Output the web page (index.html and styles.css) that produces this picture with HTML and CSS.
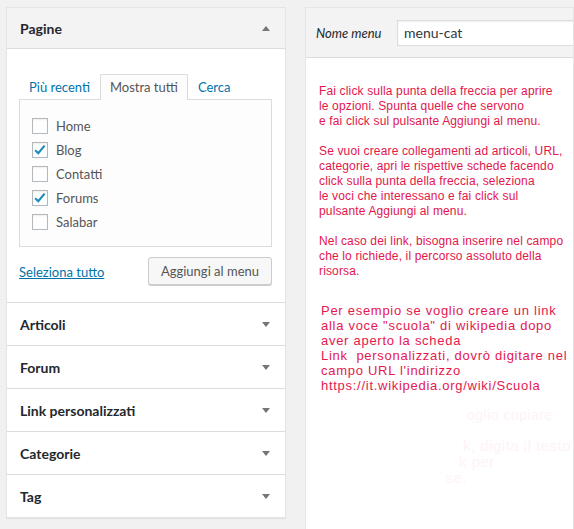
FILE: index.html
```html
<!DOCTYPE html>
<html lang="it">
<head>
<meta charset="utf-8">
<title>Menu</title>
<link rel="stylesheet" href="styles.css">
</head>
<body>
<div class="page">
  <div class="side">
    <section class="box open">
      <div class="box-head">
        <h3>Pagine</h3>
        <span class="arrow up"></span>
      </div>
      <div class="box-body">
        <ul class="tabs">
          <li>Più recenti</li>
          <li class="active">Mostra tutti</li>
          <li>Cerca</li>
        </ul>
        <div class="tab-panel">
          <label class="item"><span class="cb"></span>Home</label>
          <label class="item"><span class="cb checked"><svg viewBox="0 0 16 16" width="16" height="16"><path d="M3.2 8.2 L6.3 11.2 L12.6 3.6" fill="none" stroke="#1e8cbe" stroke-width="2.2" stroke-linecap="butt" stroke-linejoin="miter"/></svg></span>Blog</label>
          <label class="item"><span class="cb"></span>Contatti</label>
          <label class="item"><span class="cb checked"><svg viewBox="0 0 16 16" width="16" height="16"><path d="M3.2 8.2 L6.3 11.2 L12.6 3.6" fill="none" stroke="#1e8cbe" stroke-width="2.2" stroke-linecap="butt" stroke-linejoin="miter"/></svg></span>Forums</label>
          <label class="item"><span class="cb"></span>Salabar</label>
        </div>
        <div class="actions">
          <a class="select-all" href="#">Seleziona tutto</a>
          <button class="btn">Aggiungi al menu</button>
        </div>
      </div>
    </section>
    <section class="box closed"><h3>Articoli</h3><span class="arrow down"></span></section>
    <section class="box closed"><h3>Forum</h3><span class="arrow down"></span></section>
    <section class="box closed"><h3>Link personalizzati</h3><span class="arrow down"></span></section>
    <section class="box closed"><h3>Categorie</h3><span class="arrow down"></span></section>
    <section class="box closed"><h3>Tag</h3><span class="arrow down"></span></section>
  </div>

  <div class="main">
    <div class="main-head">
      <span class="name-label">Nome menu</span>
      <div class="name-input">menu-cat</div>
    </div>
    <div class="main-body">
      <p class="note">Fai click sulla punta della freccia per aprire<br>le opzioni. Spunta quelle che servono<br>e fai click sul pulsante Aggiungi al menu.</p>
      <p class="note">Se vuoi creare collegamenti ad articoli, URL,<br>categorie, apri le rispettive schede facendo<br>click sulla punta della freccia, seleziona<br>le voci che interessano e fai click sul<br>pulsante Aggiungi al menu.</p>
      <p class="note">Nel caso dei link, bisogna inserire nel campo<br>che lo richiede, il percorso assoluto della<br>risorsa.</p>
      <p class="note big">Per esempio se voglio creare un link<br>alla voce "scuola" di wikipedia dopo<br>aver aperto la scheda<br>Link &nbsp;personalizzati, dovrò digitare nel<br>campo URL l'indirizzo<br>https://it.wikipedia.org/wiki/Scuola</p>
      <span class="ghost g2">oglio copiare</span>
      <span class="ghost g3">k, digita il testo</span>
      <span class="ghost g4">k per</span>
      <span class="ghost g5">se.</span>
    </div>
  </div>
</div>
</body>
</html>
```

FILE: styles.css
```css
* { box-sizing: border-box; }
html, body { margin: 0; padding: 0; }
body {
  background: #f1f1f1;
  font-family: "Segoe UI", Lato, "Noto Sans", sans-serif;
  font-size: 13px;
  color: #444;
  overflow: hidden;
}
.page {
  display: flex;
  align-items: flex-start;
  gap: 19px;
  padding: 7px 0 0 6px;
  width: 574px;
  height: 529px;
}
.side {
  width: 280px;
  flex: none;
  background: #fff;
  border: 1px solid #e5e5e5;
  box-shadow: 0 1px 1px rgba(0,0,0,0.06);
}
.box + .box { border-top: 1px solid #dcdcdc; }
h3 {
  margin: 0;
  font-size: 14px;
  font-weight: 700;
  color: #23282d;
}
.box-head {
  height: 41px;
  background: #f3f3f3;
  border-bottom: 1px solid #dcdcdc;
  display: flex;
  align-items: center;
  justify-content: space-between;
  padding: 0 15px 0 13px;
}
.closed {
  height: 43px;
  display: flex;
  align-items: center;
  justify-content: space-between;
  padding: 0 15px 0 13px;
}
.arrow {
  width: 0; height: 0;
  border-left: 4px solid transparent;
  border-right: 4px solid transparent;
}
.arrow.up { border-bottom: 5px solid #72777c; }
.arrow.down { border-top: 5px solid #72777c; }

.box-body {
  padding: 25px 13px 17px 12px;
}
.tabs {
  list-style: none;
  margin: 0;
  padding: 0;
  display: flex;
  height: 25px;
  position: relative;
  z-index: 1;
}
.tabs li {
  padding: 0 9px;
  line-height: 24px;
  color: #0073aa;
  border: 1px solid transparent;
  border-bottom: none;
}
.tabs li.active {
  color: #555;
  background: #fdfdfd;
  border-color: #dcdcdc;
  height: 26px;
}
.tab-panel {
  border: 1px solid #dcdcdc;
  background: #fdfdfd;
  height: 148px;
  padding: 18px 12px 0;
  display: flex;
  flex-direction: column;
  gap: 8px;
}
.item {
  display: flex;
  align-items: center;
  gap: 8px;
  height: 16px;
  color: #555;
  line-height: 16px;
}
.cb {
  width: 16px;
  height: 16px;
  border: 1px solid #b4b9be;
  background: #fff;
  box-shadow: inset 0 1px 2px rgba(0,0,0,0.07);
  flex: none;
  position: relative;
}
.cb svg { position: absolute; left: -1px; top: -1px; }
.actions {
  display: flex;
  justify-content: space-between;
  align-items: center;
  margin-top: 10px;
}
.select-all {
  color: #0073aa;
  text-decoration: underline;
  margin-top: 2px;
}
.btn {
  font-family: inherit;
  font-size: 13px;
  color: #555;
  height: 28px;
  padding: 0 12px 1px;
  background: #f7f7f7;
  border: 1px solid #cccccc;
  border-radius: 3px;
  box-shadow: 0 1px 0 #cccccc;
}

.main {
  flex: 1;
  min-width: 0;
  height: 540px;
  background: #fff;
  border: 1px solid #e5e5e5;
}
.main-head {
  height: 50px;
  background: #f3f3f3;
  border-bottom: 1px solid #dcdcdc;
  display: flex;
  align-items: center;
  padding: 0 0 0 10px;
  gap: 11px;
  overflow: hidden;
}
.name-label {
  flex: none;
  font-style: italic;
  color: #23282d;
  white-space: nowrap;
  width: 70px;
}
.name-input {
  flex: none;
  width: 220px;
  height: 26px;
  border: 1px solid #dcdcdc;
  background: #fff;
  box-shadow: inset 0 1px 2px rgba(0,0,0,0.07);
  font-size: 14px;
  line-height: 24px;
  padding: 0 6px;
  color: #32373c;
}
.main-body {
  position: relative;
  padding: 26px 0 0 13px;
}
.note {
  margin: 0 0 15px;
  font-family: "Liberation Sans", Arial, sans-serif;
  font-size: 12px;
  line-height: 15px;
  color: #e2164c;
  letter-spacing: 0.15px;
  white-space: nowrap;
}
.note.big {
  font-size: 13px;
  letter-spacing: 0.72px;
  margin-top: 24px;
  padding-left: 2px;
  color: #e5174f;
}
.ghost {
  position: absolute;
  font-family: "Liberation Sans", Arial, sans-serif;
  white-space: nowrap;
  color: #fef3f6;
  font-size: 14px;
  letter-spacing: 0.5px;
}
.g2 { left: 161px; top: 349px; }
.g3 { left: 157px; top: 379px; font-size: 15px; }
.g4 { left: 153px; top: 395px; font-size: 15px; }
.g5 { left: 140px; top: 411px; font-size: 15px; }
```
